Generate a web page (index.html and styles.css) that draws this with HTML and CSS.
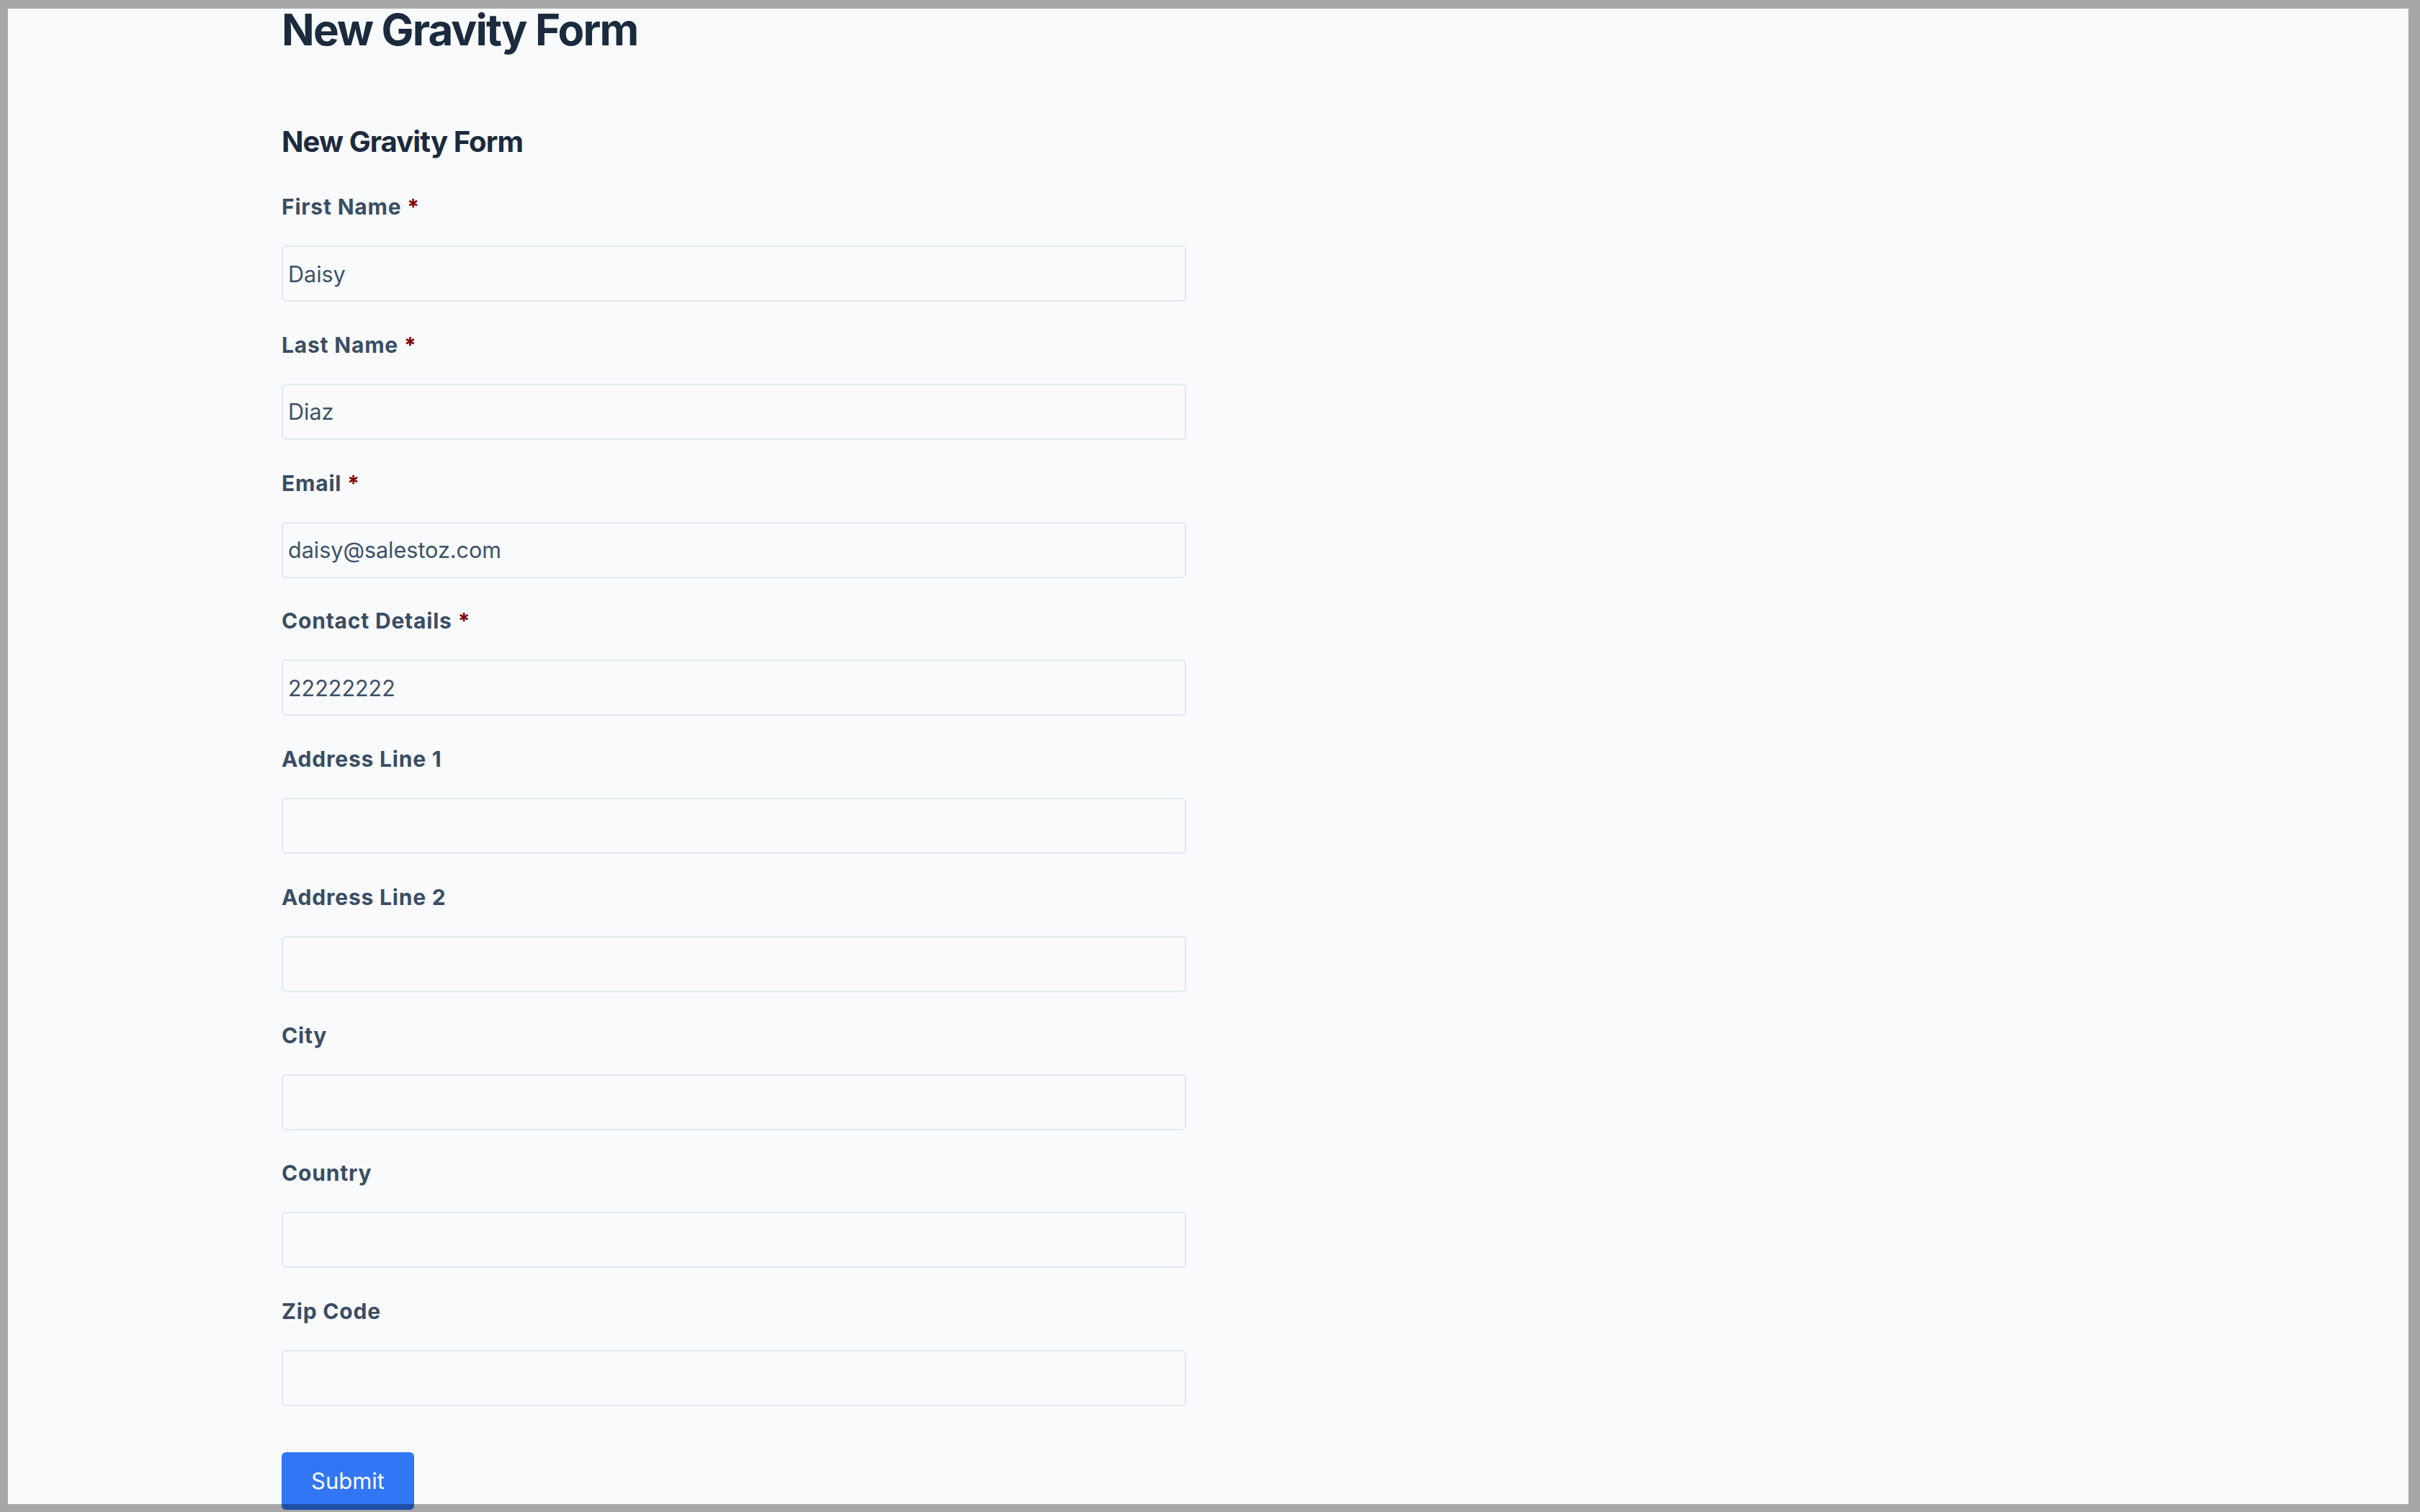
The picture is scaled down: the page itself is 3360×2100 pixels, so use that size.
FILE: index.html
```html
<!DOCTYPE html>
<html lang="en">
<head>
<meta charset="utf-8">
<title>New Gravity Form</title>
<link rel="stylesheet" href="styles.css">
</head>
<body>
<div class="page">
  <h1 class="title">New Gravity Form</h1>
  <form class="gform">
    <h2 class="form-title">New Gravity Form</h2>
    <div class="field">
      <label class="field-label">First Name <span class="req">*</span></label>
      <input class="field-input" type="text" value="Daisy">
    </div>
    <div class="field">
      <label class="field-label">Last Name <span class="req">*</span></label>
      <input class="field-input" type="text" value="Diaz">
    </div>
    <div class="field">
      <label class="field-label">Email <span class="req">*</span></label>
      <input class="field-input" type="text" value="daisy@salestoz.com">
    </div>
    <div class="field">
      <label class="field-label">Contact Details <span class="req">*</span></label>
      <input class="field-input" type="text" value="22222222">
    </div>
    <div class="field">
      <label class="field-label">Address Line 1</label>
      <input class="field-input" type="text" value="">
    </div>
    <div class="field">
      <label class="field-label">Address Line 2</label>
      <input class="field-input" type="text" value="">
    </div>
    <div class="field">
      <label class="field-label">City</label>
      <input class="field-input" type="text" value="">
    </div>
    <div class="field">
      <label class="field-label">Country</label>
      <input class="field-input" type="text" value="">
    </div>
    <div class="field">
      <label class="field-label">Zip Code</label>
      <input class="field-input" type="text" value="">
    </div>
    <button class="submit" type="button">Submit</button>
  </form>
</div>
<div class="frame"></div>
</body>
</html>
```

FILE: styles.css
```css
html, body {
  margin: 0;
  padding: 0;
  background: #f8fafc;
  font-family: Inter, "Noto Sans", "Liberation Sans", sans-serif;
  overflow: hidden;
}

.page {
  padding: 5px 0 0 391px;
}

.title {
  margin: 0;
  font-size: 60px;
  line-height: 72px;
  font-weight: 700;
  letter-spacing: -1.85px;
  color: #1b2a3d;
}

.gform {
  display: flex;
  flex-direction: column;
  align-items: flex-start;
}

.form-title {
  margin: 92px 0 42px;
  font-size: 40px;
  line-height: 56px;
  font-weight: 700;
  letter-spacing: -0.9px;
  color: #1b2a3d;
}

.field {
  display: flex;
  flex-direction: column;
  margin-bottom: 39.75px;
}

.field-label {
  display: block;
  font-size: 30px;
  line-height: 40px;
  font-weight: 700;
  letter-spacing: 0.8px;
  color: #3a4d63;
  margin-bottom: 34px;
}

.req {
  color: #800000;
}

.field-input {
  display: block;
  box-sizing: border-box;
  width: 1256px;
  height: 78px;
  margin: 0;
  padding: 0 7px;
  border: 2px solid #e2e8f0;
  border-radius: 6px;
  background: #f8fafc;
  font-family: Inter, "Noto Sans", "Liberation Sans", sans-serif;
  font-size: 30.5px;
  color: #3e5168;
  outline: none;
}

.submit {
  margin-top: 24px;
  height: 80px;
  padding: 0 41px;
  border: 0;
  border-radius: 6px;
  background: #3176f5;
  color: #ffffff;
  font-family: Inter, "Noto Sans", "Liberation Sans", sans-serif;
  font-size: 31px;
  cursor: pointer;
}

.frame {
  position: fixed;
  inset: 0;
  border-style: solid;
  border-color: rgba(0, 0, 0, 0.33);
  border-width: 12px 16px 11px 11px;
  pointer-events: none;
}
```
